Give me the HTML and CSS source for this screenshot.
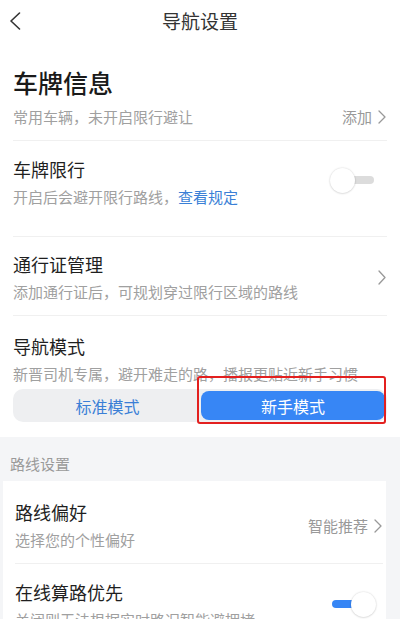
FILE: index.html
```html
<!DOCTYPE html>
<html lang="zh-CN">
<head>
<meta charset="utf-8">
<title>导航设置</title>
<link rel="stylesheet" href="styles.css">
</head>
<body>
<div class="page">
  <header class="topbar">
    <svg class="back" width="12" height="18" viewBox="0 0 12 18"><path d="M10.5 1 L2 9 L10.5 17" fill="none" stroke="#333" stroke-width="1.6" stroke-linecap="round" stroke-linejoin="round"/></svg>
    <h1 class="topbar-title">导航设置</h1>
  </header>

  <section class="top-section">
    <div class="plate-block">
      <div class="plate-title">车牌信息</div>
      <div class="plate-sub">
        <span class="sub">常用车辆，未开启限行避让</span>
        <span class="action">添加<svg class="chev" width="8" height="14" viewBox="0 0 8 14"><path d="M1 1 L7 7 L1 13" fill="none" stroke="#999" stroke-width="1.3" stroke-linecap="round" stroke-linejoin="round"/></svg></span>
      </div>
    </div>

    <div class="row row-limit">
      <div class="text-col">
        <div class="item-title">车牌限行</div>
        <div class="sub">开启后会避开限行路线，<span class="link">查看规定</span></div>
      </div>
      <div class="toggle off"><span class="track"></span><span class="knob"></span></div>
    </div>

    <div class="row row-pass">
      <div class="text-col">
        <div class="item-title">通行证管理</div>
        <div class="sub">添加通行证后，可规划穿过限行区域的路线</div>
      </div>
      <svg class="chev-lg" width="8" height="15" viewBox="0 0 8 15"><path d="M1 1 L7 7.5 L1 14" fill="none" stroke="#999" stroke-width="1.3" stroke-linecap="round" stroke-linejoin="round"/></svg>
    </div>

    <div class="row-mode">
      <div class="item-title">导航模式</div>
      <div class="sub">新晋司机专属，避开难走的路，播报更贴近新手习惯</div>
      <div class="segment">
        <div class="seg-item">标准模式</div>
        <div class="seg-item active">新手模式</div>
      </div>
      <div class="highlight"></div>
    </div>
  </section>

  <div class="gray-area">
    <div class="group-head">路线设置</div>
    <section class="card">
      <div class="row row-pref">
        <div class="text-col">
          <div class="item-title">路线偏好</div>
          <div class="sub">选择您的个性偏好</div>
        </div>
        <span class="action">智能推荐<svg class="chev" width="8" height="14" viewBox="0 0 8 14"><path d="M1 1 L7 7 L1 13" fill="none" stroke="#999" stroke-width="1.3" stroke-linecap="round" stroke-linejoin="round"/></svg></span>
      </div>
      <div class="row row-online">
        <div class="text-col">
          <div class="item-title">在线算路优先</div>
          <div class="sub">关闭则无法根据实时路况智能避拥堵</div>
        </div>
        <div class="toggle on"><span class="track"></span><span class="knob"></span></div>
      </div>
    </section>
  </div>
</div>
</body>
</html>
```

FILE: styles.css
```css
* { box-sizing: border-box; }
html, body {
  margin: 0;
  padding: 0;
  background: #ffffff;
}
body {
  font-family: "Noto Sans CJK SC", "Noto Sans", "Liberation Sans", sans-serif;
  color: #1f1f1f;
  width: 400px;
  height: 619px;
  overflow: hidden;
}
.page {
  width: 400px;
}
.topbar {
  position: relative;
  height: 42px;
  display: flex;
  align-items: center;
  justify-content: center;
}
.back {
  position: absolute;
  left: 9px;
  top: 12px;
}
.topbar-title {
  margin: 0;
  font-size: 19px;
  font-weight: 400;
  color: #333;
  line-height: 26px;
}
.top-section {
  padding: 0 13px 15px 13px;
  background: #fff;
}
.plate-block {
  border-bottom: 1px solid #f0f0f0;
  padding-bottom: 12px;
}
.plate-title {
  margin-top: 23px;
  font-size: 25px;
  line-height: 34px;
  font-weight: 500;
  color: #1a1a1a;
}
.plate-sub {
  margin-top: 7px;
  display: flex;
  justify-content: space-between;
  align-items: center;
}
.sub {
  font-size: 15px;
  line-height: 22px;
  color: #a0a0a0;
  white-space: nowrap;
}
.link {
  color: #3a7fd6;
}
.action {
  display: flex;
  align-items: center;
  gap: 6px;
  font-size: 15px;
  line-height: 22px;
  color: #999;
  padding-right: 1px;
}
.row {
  display: flex;
  align-items: center;
  justify-content: space-between;
  border-bottom: 1px solid #f0f0f0;
}
.text-col {
  display: flex;
  flex-direction: column;
  gap: 5px;
}
.item-title {
  font-size: 18px;
  line-height: 24px;
  color: #1f1f1f;
}
.row-limit {
  padding: 16px 0 28px 0;
}
.row-pass {
  padding: 15px 0 12px 0;
}
.chev-lg {
  margin-right: 1px;
}
.row-mode {
  position: relative;
  padding-top: 18px;
}
.row-mode .sub {
  margin-top: 5px;
}
.segment {
  margin-top: 4px;
  height: 33px;
  background: #eeeff1;
  border-radius: 10px;
  padding: 2px;
  display: grid;
  grid-template-columns: 1fr 1fr;
}
.seg-item {
  display: flex;
  align-items: center;
  justify-content: center;
  font-size: 16px;
  color: #3a7fd6;
  border-radius: 8px;
}
.seg-item.active {
  background: #3786f5;
  color: #fff;
  margin-left: 1px;
}
.highlight {
  position: absolute;
  left: 184px;
  top: 60px;
  width: 189px;
  height: 48px;
  border: 2px solid #e3201f;
  border-radius: 3px;
}
.toggle {
  position: relative;
  width: 47px;
  height: 25px;
  flex: none;
}
.toggle .track {
  position: absolute;
  left: 3px;
  right: 3px;
  top: 8px;
  height: 8px;
  border-radius: 4px;
  background: #dcdcdc;
}
.toggle .knob {
  position: absolute;
  top: 0;
  width: 25px;
  height: 25px;
  border-radius: 50%;
  background: #fff;
  box-shadow: 0 0 2px rgba(0,0,0,0.18), 0 1px 2px rgba(0,0,0,0.08);
}
.toggle.off .knob { left: 0; }
.toggle.on .knob { right: 0; }
.toggle.on .track { background: #3786f5; }
.row-limit .toggle {
  margin-right: 10px;
  margin-bottom: 5px;
}
.gray-area {
  background: #f4f5f7;
  padding-bottom: 40px;
}
.group-head {
  height: 44px;
  padding: 16px 0 0 10px;
  font-size: 15px;
  line-height: 22px;
  color: #9a9a9a;
}
.card {
  background: #fff;
  margin: 0 14px 0 3px;
  padding: 0 3px 0 12px;
}
.row-pref {
  padding: 19px 0 12px 0;
}
.row-online {
  padding: 16px 0 0 0;
  border-bottom: none;
  align-items: flex-start;
}
.row-online .toggle {
  margin-top: 12px;
  margin-right: 7px;
}
```
